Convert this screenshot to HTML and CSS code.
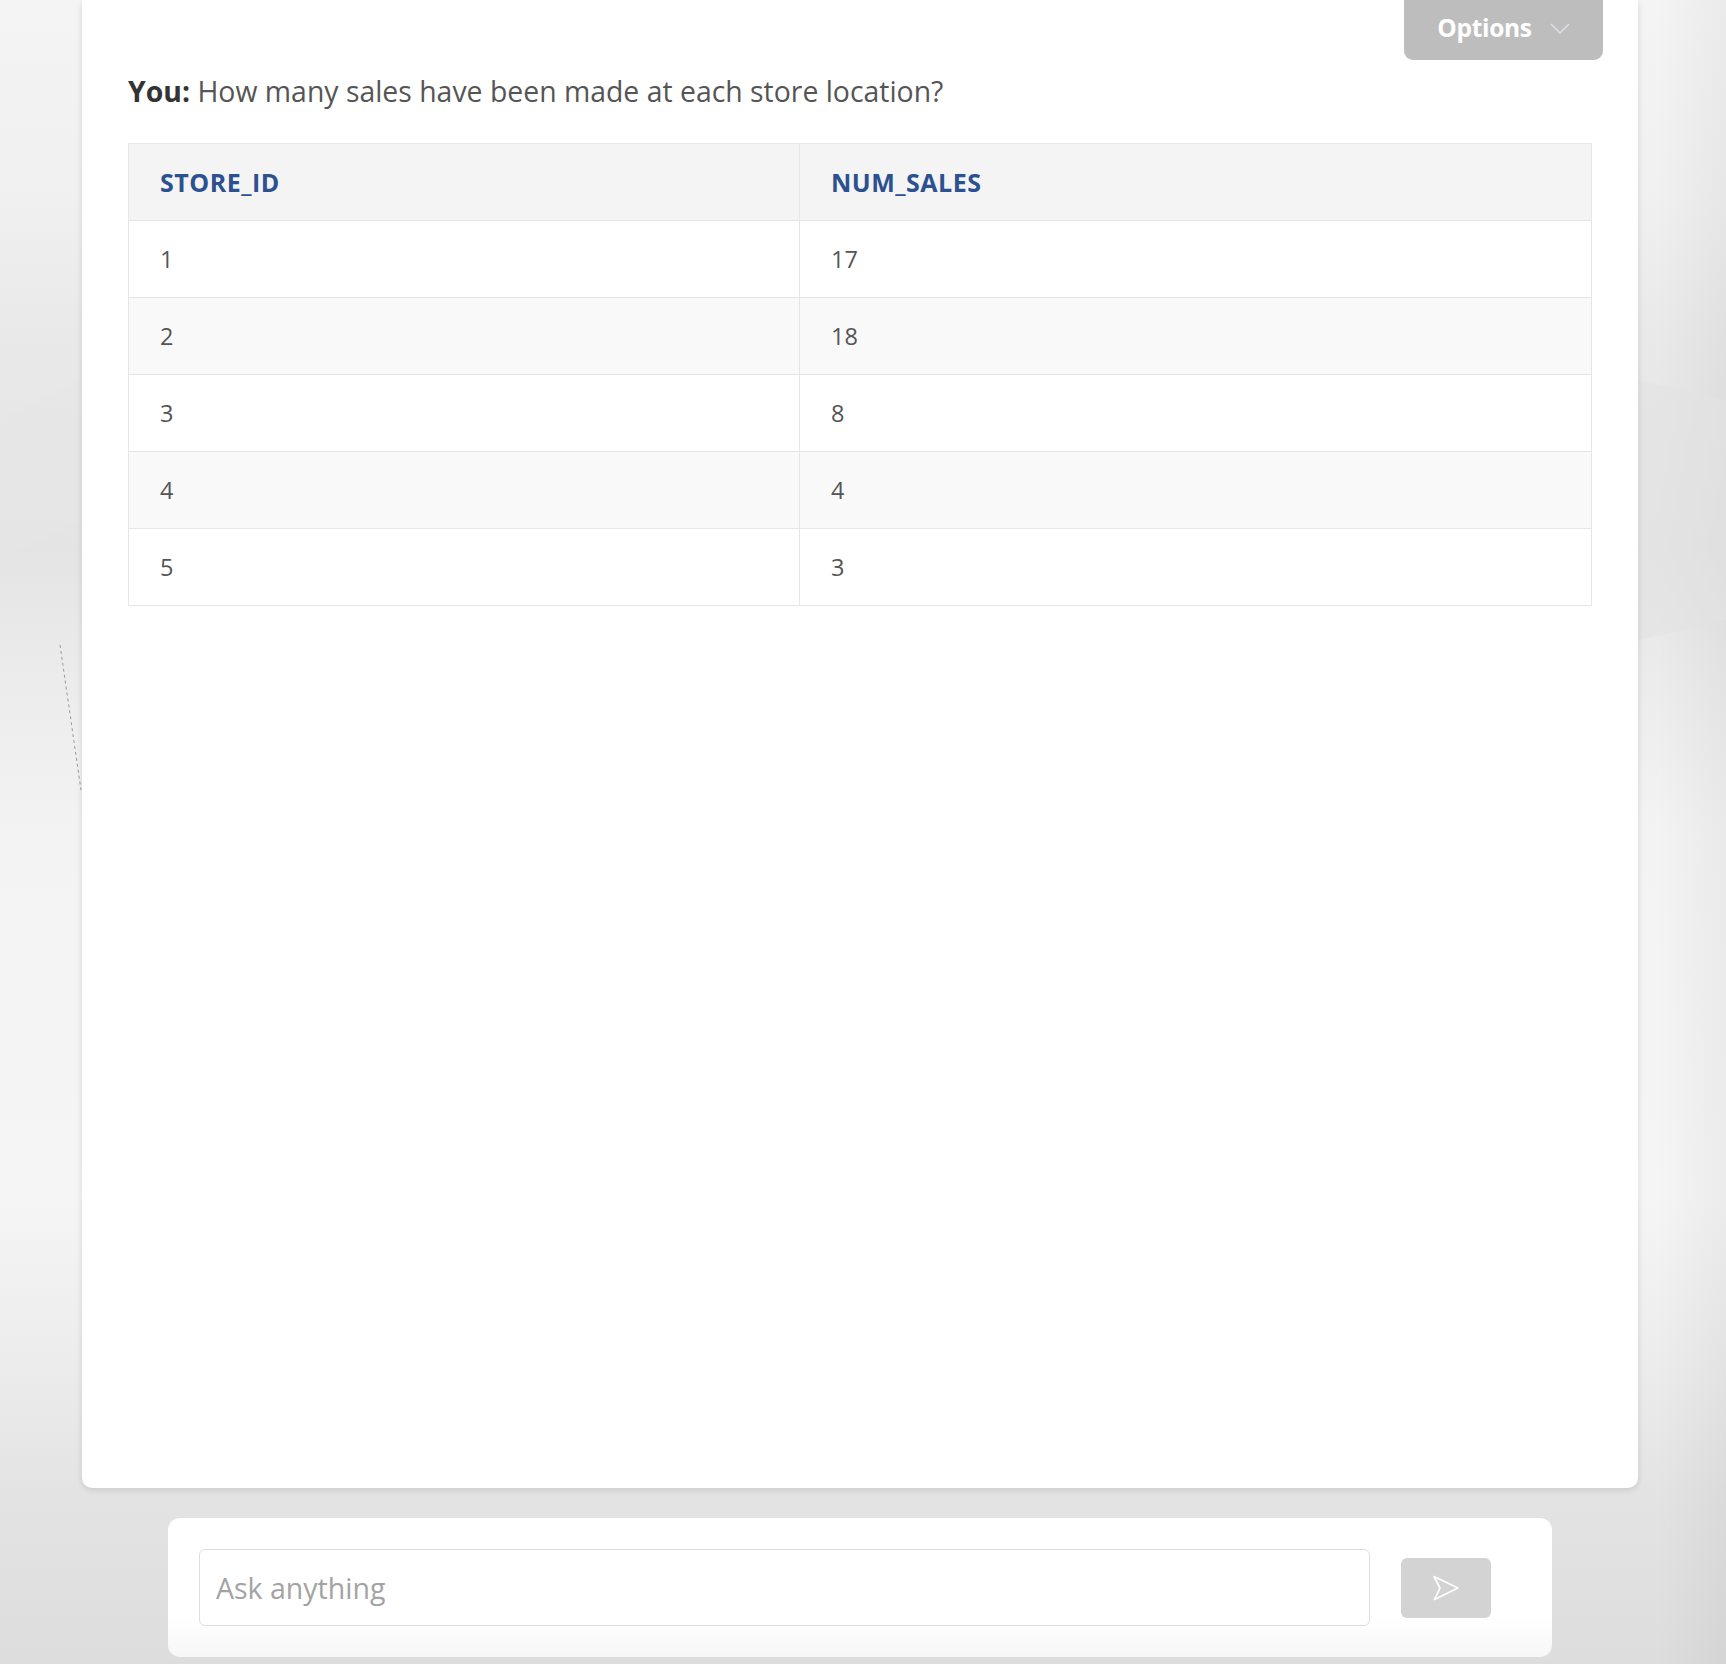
FILE: index.html
```html
<!DOCTYPE html>
<html lang="en">
<head>
<meta charset="utf-8">
<title>Chat</title>
<link rel="stylesheet" href="styles.css">
</head>
<body>
<svg class="bg-deco" width="1726" height="1664" viewBox="0 0 1726 1664" aria-hidden="true">
  <polygon points="0,420 82,380 82,520 0,560" fill="#e6e6e6" opacity="0.6"/>
  <polygon points="1638,380 1726,400 1726,620 1638,640" fill="#e2e2e2" opacity="0.6"/>
  <line x1="60" y1="645" x2="81" y2="790" stroke="#9a9a9a" stroke-width="1" stroke-dasharray="3 3"/>
</svg>
<div class="page">
  <main class="card">
    <div class="card-top">
      <button class="options-btn">Options
        <svg class="chev" width="20" height="11" viewBox="0 0 20 11"><path d="M1 1 L10 10 L19 1" fill="none" stroke="#dcdce6" stroke-width="1.6"/></svg>
      </button>
    </div>
    <p class="question"><strong>You:</strong> How many sales have been made at each store location?</p>
    <table class="result">
      <thead>
        <tr><th class="c1">STORE_ID</th><th>NUM_SALES</th></tr>
      </thead>
      <tbody>
        <tr><td class="c1">1</td><td>17</td></tr>
        <tr><td class="c1">2</td><td>18</td></tr>
        <tr><td class="c1">3</td><td>8</td></tr>
        <tr><td class="c1">4</td><td>4</td></tr>
        <tr><td class="c1">5</td><td>3</td></tr>
      </tbody>
    </table>
  </main>
  <form class="composer">
    <input class="ask" type="text" placeholder="Ask anything">
    <button class="send" type="button" aria-label="Send">
      <svg width="28" height="26" viewBox="0 0 28 26"><path d="M2 1.5 L26 13 L2.5 24.5 L8 13 Z" fill="none" stroke="#ffffff" stroke-width="1.7" stroke-linejoin="round"/></svg>
    </button>
  </form>
</div>
</body>
</html>
```
FILE: styles.css
```css
* { box-sizing: border-box; }
html, body { margin: 0; padding: 0; }
body {
  width: 1726px;
  height: 1664px;
  overflow: hidden;
  position: relative;
  font-family: "Open Sans", "Noto Sans", sans-serif;
  background:
    linear-gradient(90deg, rgba(0,0,0,0) 96%, rgba(0,0,0,0.04) 100%),
    linear-gradient(180deg, #f4f4f4 0%, #f0f0f0 12%, #e9e9e9 20%, #e4e4e4 33%, #ebebeb 40%, #f3f3f3 50%, #f5f5f5 72%, #ececec 82%, #e3e3e3 90%, #dddddd 100%);
}
.bg-deco {
  position: absolute;
  left: 0;
  top: 0;
  z-index: 0;
}
.page {
  position: relative;
  z-index: 1;
  height: 1664px;
  display: flex;
  flex-direction: column;
  padding-left: 82px;
  padding-bottom: 7px;
}
.card {
  width: 1556px;
  flex: 1;
  background: #ffffff;
  border-radius: 0 0 10px 10px;
  box-shadow: 0 2px 6px rgba(0,0,0,0.12);
  padding: 0 46px;
}
.card-top {
  display: flex;
  justify-content: flex-end;
  margin-right: -11px;
}
.options-btn {
  margin-top: -12px;
  width: 199px;
  height: 72px;
  padding-top: 8px;
  border: none;
  border-radius: 0 0 9px 9px;
  background: #bdbdbd;
  color: #ffffff;
  font-family: "Open Sans", sans-serif;
  font-weight: 700;
  font-size: 24.5px;
  display: flex;
  align-items: center;
  justify-content: center;
  gap: 18px;
  letter-spacing: -0.3px;
}
.chev { margin-top: 2px; }
.question {
  margin: 13px 0 0;
  font-size: 28.4px;
  line-height: 36px;
  color: #555555;
}
.question strong { color: #333333; font-weight: 700; }
.result {
  margin-top: 34px;
  width: 1464px;
  border-collapse: collapse;
  border: 1px solid #e2e2e2;
}
.result th, .result td {
  height: 77px;
  padding: 0 0 0 31px;
  text-align: left;
  border: 1px solid #e6e6e6;
}
.result th {
  background: #f4f4f4;
  color: #2b5190;
  font-weight: 700;
  font-size: 25px;
  letter-spacing: 0.5px;
}
.result td {
  color: #555555;
  font-size: 23.5px;
}
.result tbody tr:nth-child(even) td { background: #f9f9f9; }
.result .c1 { width: 671px; }
.composer {
  margin: 30px 0 0 86px;
  width: 1384px;
  height: 139px;
  background: linear-gradient(180deg, #ffffff 70%, #f7f7f7 100%);
  border-radius: 12px;
  display: flex;
  align-items: center;
  padding: 0 61px 0 31px;
  gap: 31px;
  flex-shrink: 0;
}
.ask {
  flex: 1;
  height: 77px;
  border: 1px solid #dedede;
  border-radius: 6px;
  padding: 0 16px;
  font-family: "Open Sans", sans-serif;
  font-size: 28.5px;
  color: #333;
  background: #ffffff;
}
.ask::placeholder { color: #a3a3a3; }
.send {
  width: 90px;
  height: 60px;
  border: none;
  border-radius: 6px;
  background: #d3d3d3;
  display: flex;
  align-items: center;
  justify-content: center;
  padding: 0;
}
```
